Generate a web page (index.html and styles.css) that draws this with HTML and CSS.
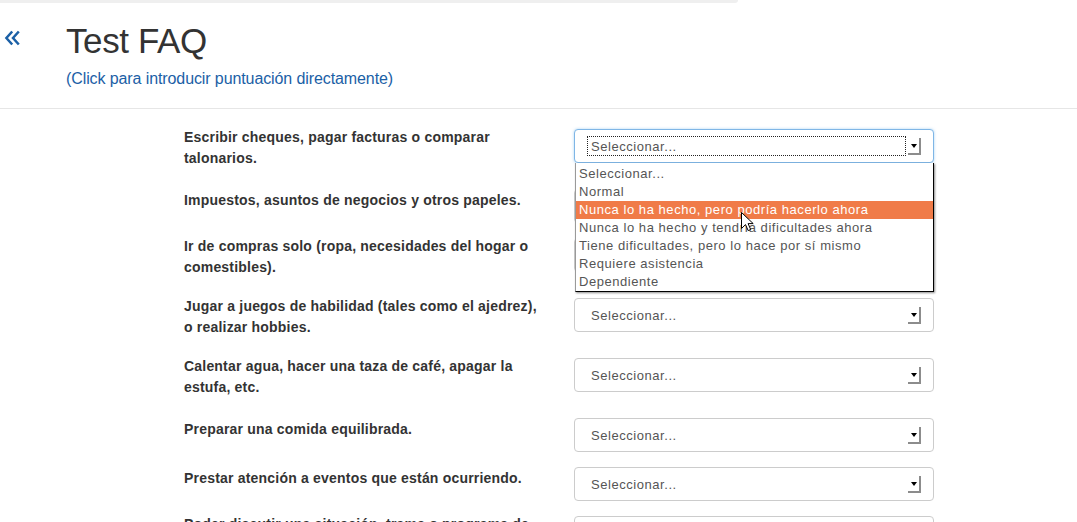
FILE: index.html
```html
<!DOCTYPE html>
<html lang="es">
<head>
<meta charset="utf-8">
<title>Test FAQ</title>
<link rel="stylesheet" href="styles.css">
</head>
<body>
<div class="topbar"></div>
<header class="header">
  <a class="back" href="#" aria-label="Volver">
    <svg width="17" height="16" viewBox="0 0 17 16"><path d="M8.2 1.5 L2.4 8 L8.2 14.5 M14.8 1.5 L9 8 L14.8 14.5" fill="none" stroke="#1b60a6" stroke-width="2.5" stroke-linejoin="miter"/></svg>
  </a>
  <div class="titles">
    <h1 class="title">Test FAQ</h1>
    <div class="subtitle">(Click para introducir puntuación directamente)</div>
  </div>
</header>
<main class="form">
  <div class="row">
    <div class="label">Escribir cheques, pagar facturas o comparar talonarios.</div>
    <div class="select focused">
      <span class="value">Seleccionar...</span><span class="arrow"></span>
      <ul class="dropdown">
        <li>Seleccionar...</li>
        <li>Normal</li>
        <li class="hl">Nunca lo ha hecho, pero podría hacerlo ahora</li>
        <li>Nunca lo ha hecho y tendría dificultades ahora</li>
        <li>Tiene dificultades, pero lo hace por sí mismo</li>
        <li>Requiere asistencia</li>
        <li>Dependiente</li>
      </ul>
    </div>
  </div>
  <div class="row">
    <div class="label">Impuestos, asuntos de negocios y otros papeles.</div>
    <div class="select"><span class="value">Seleccionar...</span><span class="arrow"></span></div>
  </div>
  <div class="row">
    <div class="label">Ir de compras solo (ropa, necesidades del hogar o comestibles).</div>
    <div class="select"><span class="value">Seleccionar...</span><span class="arrow"></span></div>
  </div>
  <div class="row">
    <div class="label">Jugar a juegos de habilidad (tales como el ajedrez), o realizar hobbies.</div>
    <div class="select"><span class="value">Seleccionar...</span><span class="arrow"></span></div>
  </div>
  <div class="row">
    <div class="label">Calentar agua, hacer una taza de café, apagar la estufa, etc.</div>
    <div class="select"><span class="value">Seleccionar...</span><span class="arrow"></span></div>
  </div>
  <div class="row">
    <div class="label">Preparar una comida equilibrada.</div>
    <div class="select"><span class="value">Seleccionar...</span><span class="arrow"></span></div>
  </div>
  <div class="row">
    <div class="label">Prestar atención a eventos que están ocurriendo.</div>
    <div class="select"><span class="value">Seleccionar...</span><span class="arrow"></span></div>
  </div>
  <div class="row">
    <div class="label">Poder discutir una situación, trama o programa de TV.</div>
    <div class="select"><span class="value">Seleccionar...</span><span class="arrow"></span></div>
  </div>
</main>
<svg class="cursor" width="13" height="20" viewBox="0 0 13 20"><path d="M0.5 0.5 V16.5 L4.5 12.6 L7.2 18.6 L9.7 17.5 L7.1 11.6 H12.2 Z" fill="#fff" stroke="#000" stroke-width="1" stroke-linejoin="miter"/></svg>
</body>
</html>
```
FILE: styles.css
```css
html, body {
  margin: 0;
  padding: 0;
  background: #fff;
  overflow: hidden;
}
body {
  font-family: "Liberation Sans", Arial, sans-serif;
  color: #333;
}
.topbar {
  width: 738px;
  height: 3px;
  background: #efefef;
  border-bottom-right-radius: 4px;
}
.header {
  display: flex;
  border-bottom: 1px solid #e6e6e6;
}
.back {
  display: block;
  width: 62px;
  padding: 27px 0 0 4px;
  line-height: 0;
}
.titles {
  padding: 18px 0 19px 0;
}
.title {
  margin: 0;
  font-size: 35px;
  line-height: 40px;
  font-weight: normal;
  letter-spacing: -0.4px;
  color: #333;
}
.subtitle {
  margin-top: 8px;
  font-size: 16px;
  line-height: 20px;
  letter-spacing: -0.1px;
  color: #1b60a6;
}
.form {
  padding: 20px 0 0 184px;
}
.row {
  display: flex;
  align-items: flex-start;
  margin-bottom: 15px;
}
.label {
  display: flex;
  flex-direction: column;
  justify-content: center;
  box-sizing: border-box;
  width: 358px;
  min-height: 31px;
  margin: -2px 32px 0 0;
  padding-bottom: 5px;
  font-size: 14px;
  line-height: 21px;
  font-weight: bold;
  letter-spacing: 0.2px;
  color: #333;
}
.select {
  position: relative;
  box-sizing: border-box;
  width: 360px;
  height: 34px;
  padding: 0 12px;
  display: flex;
  align-items: center;
  border: 1px solid #cccccc;
  border-radius: 4px;
  background: #fff;
  font-size: 13px;
  letter-spacing: 0.55px;
  color: #555;
}
.select.focused {
  border-color: #7fb6e6;
  box-shadow: 0 0 3px rgba(102, 175, 233, 0.55);
  z-index: 2;
}
.value {
  flex: 1;
  box-sizing: border-box;
  height: 20px;
  line-height: 21px;
  padding: 0 4px;
  margin-right: 1px;
}
.focused .value {
  outline: 1px dotted #222;
  outline-offset: -1px;
}
.arrow {
  position: relative;
  box-sizing: border-box;
  width: 13px;
  height: 17px;
  margin-left: 1px;
  border-right: 2px solid #8c8c8c;
  border-bottom: 2px solid #8c8c8c;
}
.arrow::after {
  content: "";
  position: absolute;
  left: 3px;
  top: 6px;
  border-left: 3px solid transparent;
  border-right: 3px solid transparent;
  border-top: 4px solid #000;
}
.dropdown {
  position: absolute;
  top: 33px;
  left: 0;
  box-sizing: border-box;
  width: 359px;
  margin: 0;
  padding: 2px 0 0 0;
  list-style: none;
  background: #fff;
  border-left: 1px solid #9a9a9a;
  border-right: 1px solid #000;
  border-bottom: 1px solid #000;
  box-shadow: 1px 1px 2px rgba(0, 0, 0, 0.45);
  z-index: 3;
}
.dropdown li {
  height: 18px;
  line-height: 18px;
  padding-left: 3px;
  white-space: nowrap;
  color: #555;
}
.dropdown li.hl {
  background: #f07b48;
  color: #fff;
}
.cursor {
  position: absolute;
  left: 741px;
  top: 212px;
  z-index: 5;
}
```
